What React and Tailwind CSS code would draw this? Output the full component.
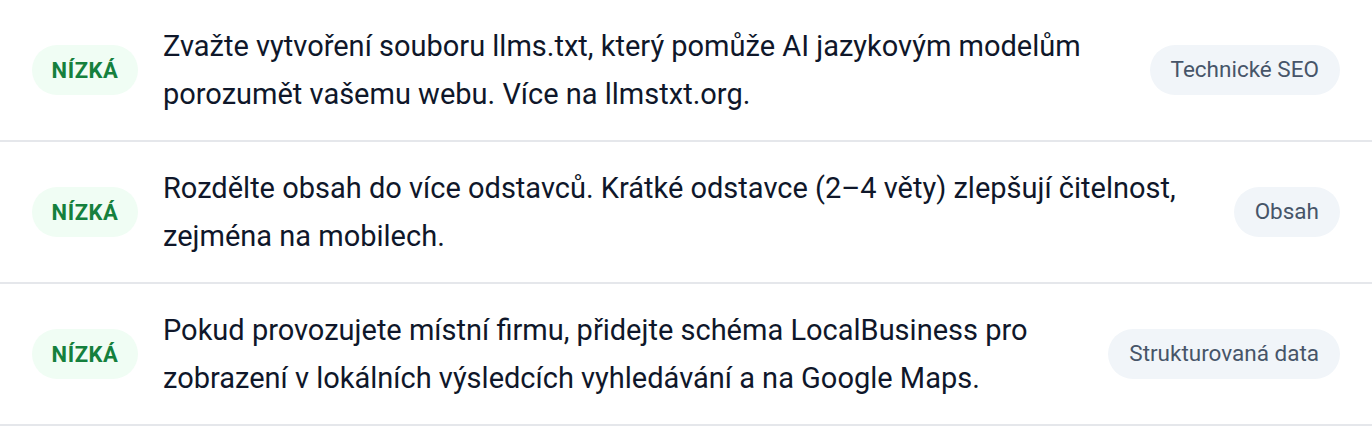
import React from "react";

const rows = [
  {
    lines: [
      "Zvažte vytvoření souboru llms.txt, který pomůže AI jazykovým modelům",
      "porozumět vašemu webu. Více na llmstxt.org.",
    ],
    tag: "Technické SEO",
  },
  {
    lines: [
      "Rozdělte obsah do více odstavců. Krátké odstavce (2–4 věty) zlepšují čitelnost,",
      "zejména na mobilech.",
    ],
    tag: "Obsah",
  },
  {
    lines: [
      "Pokud provozujete místní firmu, přidejte schéma LocalBusiness pro",
      "zobrazení v lokálních výsledcích vyhledávání a na Google Maps.",
    ],
    tag: "Strukturovaná data",
  },
];

export default function App() {
  return (
    <div className="bg-white w-[1372px] h-[428px] overflow-hidden font-['Roboto','Liberation_Sans',sans-serif]">
      {rows.map((row, i) => (
        <div
          key={i}
          className="flex items-center h-[142px] px-8 border-b-2 border-[#e5e7eb]"
        >
          <span className="flex items-center justify-center shrink-0 w-[106px] h-[50px] rounded-full bg-[#f0fdf4] text-[#15803d] text-[22px] font-bold tracking-wide">
            NÍZKÁ
          </span>
          <div className="flex-1 ml-[25px] text-[29px] leading-[48px] text-[#0f172a]">
            {row.lines.map((l, j) => (
              <span key={j} className="block whitespace-nowrap">
                {l}
              </span>
            ))}
          </div>
          <span className="shrink-0 ml-6 h-[50px] px-[21px] flex items-center rounded-full bg-[#f1f5f9] text-[#475569] text-[22.5px]">
            {row.tag}
          </span>
        </div>
      ))}
    </div>
  );
}
